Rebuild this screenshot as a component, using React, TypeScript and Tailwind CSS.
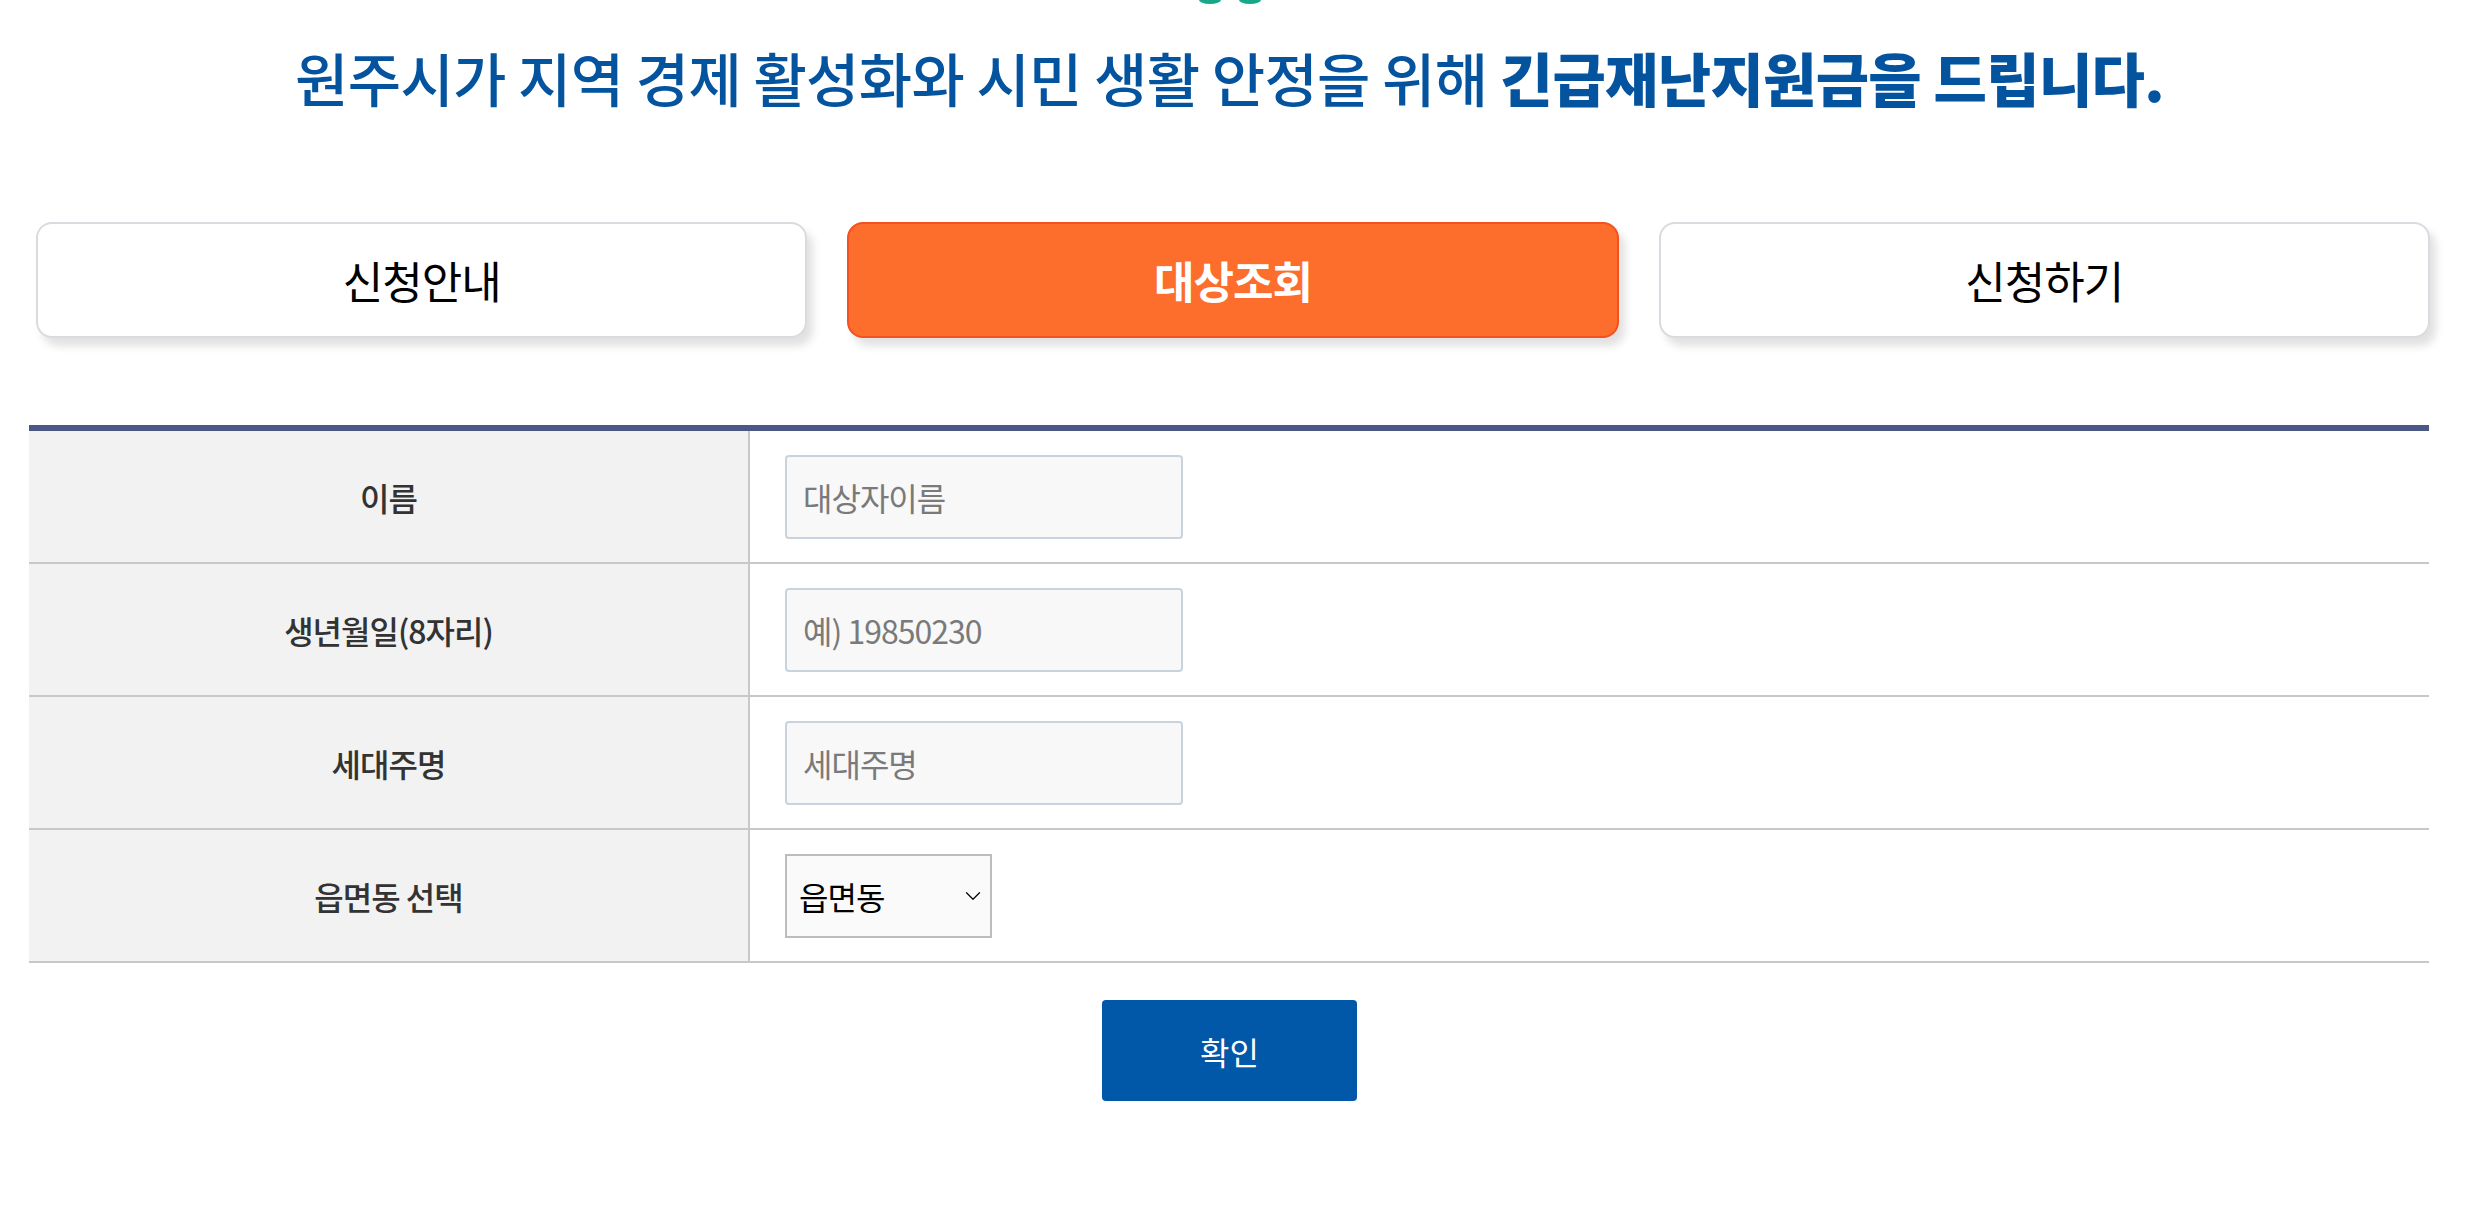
import { ChevronDown } from 'lucide-react'

const tabs = [
  { label: '신청안내', active: false },
  { label: '대상조회', active: true },
  { label: '신청하기', active: false },
]

const fields = [
  { label: '이름', placeholder: '대상자이름' },
  { label: '생년월일(8자리)', placeholder: '예) 19850230' },
  { label: '세대주명', placeholder: '세대주명' },
]

const Row = ({ label, children }: { label: string; children: React.ReactNode }) => (
  <div className="flex h-[133px] border-b-2 border-[#c8c8c8]">
    <div className="w-[721px] shrink-0 bg-[#f2f2f2] border-r-2 border-[#c8c8c8] flex items-center justify-center text-[32px] font-medium text-[#333] tracking-[-1px]">
      {label}
    </div>
    <div className="flex-1 flex items-center pl-[35px]">{children}</div>
  </div>
)

export default function App() {
  return (
    <div className="min-h-screen bg-white font-['Noto_Sans_CJK_KR','Noto_Sans',sans-serif] pl-[29px] pr-[46px]">
      {/* logo bottom peeking from above */}
      <div className="h-[5px] overflow-hidden flex justify-center">
        <svg width="62" height="5" viewBox="0 0 62 5">
          <ellipse cx="11" cy="0" rx="11" ry="4" fill="#17a88a" />
          <ellipse cx="51" cy="0" rx="11" ry="4" fill="#17a88a" />
        </svg>
      </div>

      <h1 className="mt-[43px] text-center text-[58px] leading-[58px] tracking-[-0.7px] text-[#03539f] font-medium">
        원주시가 지역 경제 활성화와 시민 생활 안정을 위해{' '}
        <strong className="font-black">긴급재난지원금을 드립니다.</strong>
      </h1>

      <div className="mt-[116px] pl-[7px] grid grid-cols-3 gap-[40px]">
        {tabs.map((t) => (
          <button
            key={t.label}
            className={
              t.active
                ? 'h-[116px] rounded-[16px] border-2 border-[#f5501f] bg-[#fd6d2c] text-white text-[44px] font-bold tracking-[-1px] shadow-[6px_8px_8px_rgba(0,0,0,0.12)]'
                : 'h-[116px] rounded-[16px] border-2 border-[#d8dbdf] bg-white text-black text-[44px] tracking-[-1px] shadow-[6px_8px_8px_rgba(0,0,0,0.12)]'
            }
          >
            {t.label}
          </button>
        ))}
      </div>

      <div className="mt-[87px] mr-[1px] border-t-[6px] border-[#4b5885]">
        {fields.map((f) => (
          <Row key={f.label} label={f.label}>
            <input
              type="text"
              placeholder={f.placeholder}
              className="w-[398px] h-[84px] border-2 border-[#c9d3de] rounded-[4px] bg-[#f8f8f8] px-[16px] text-[32px] tracking-[-1px] placeholder:text-[#7a7a7a] outline-none"
            />
          </Row>
        ))}
        <Row label="읍면동 선택">
          <div className="relative">
            <select className="appearance-none w-[207px] h-[84px] border-2 border-[#bdbdbd] bg-[#fafafa] pl-[12px] text-[32px] text-black tracking-[-1px] outline-none">
              <option>읍면동</option>
            </select>
            <ChevronDown
              className="absolute right-[6px] top-1/2 -translate-y-1/2 pointer-events-none text-black"
              size={26}
              strokeWidth={1.1}
            />
          </div>
        </Row>
      </div>

      <div className="flex justify-center mt-[37px]">
        <button className="w-[255px] h-[101px] rounded-[4px] bg-[#0157a8] text-white text-[32px]">
          확인
        </button>
      </div>
    </div>
  )
}
